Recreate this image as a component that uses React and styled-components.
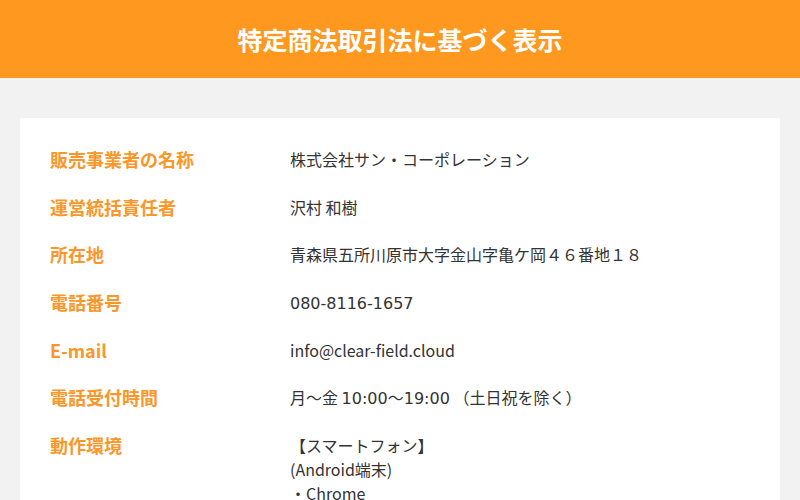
import React from 'react'
import styled, { createGlobalStyle } from 'styled-components'

const GlobalStyle = createGlobalStyle`
  html, body {
    margin: 0;
    padding: 0;
    background: #f2f2f2;
  }
  body {
    font-family: "Noto Sans CJK JP", "Liberation Sans", sans-serif;
    color: #333;
  }
`;

const Header = styled.header`
  height: 78px;
  background-color: #ff981f;
  display: flex;
  align-items: center;
  justify-content: center;
`;

const Title = styled.h1`
  margin: 0;
  color: #fff;
  font-size: 25px;
  font-weight: 700;
`;

const Main = styled.main`
  padding: 40px 20px;
`;

const Card = styled.section`
  background: #fff;
  padding: 29px 30px 30px;
`;

const Table = styled.dl`
  margin: 0;
  display: grid;
  grid-template-columns: 240px 1fr;
  row-gap: 23.67px;
`;

const Label = styled.dt`
  color: #fb9628;
  font-size: 18px;
  font-weight: 700;
  line-height: 24px;
`;

const Value = styled.dd`
  margin: 0;
  font-size: 16px;
  line-height: 24px;
  color: #333;
`;

// wider digits, closer to the reference's sans
const Num = styled.span`
  font-family: "DejaVu Sans", "Noto Sans CJK JP", sans-serif;
  font-size: 16px;
  line-height: 0;
`;

const rows = [
  ['販売事業者の名称', ['株式会社サン・コーポレーション']],
  ['運営統括責任者', ['沢村 和樹']],
  ['所在地', ['青森県五所川原市大字金山字亀ケ岡４６番地１８']],
  ['電話番号', [<Num key="tel">080-8116-1657</Num>]],
  ['E-mail', ['info@clear-field.cloud']],
  ['電話受付時間', [<React.Fragment key="time">月〜金 <Num>10:00</Num>〜<Num>19:00</Num> （土日祝を除く）</React.Fragment>]],
  ['動作環境', ['【スマートフォン】', '(Android端末)', '・Chrome']],
];

const App = () => {
  return (
    <>
      <GlobalStyle />
      <Header>
        <Title>特定商法取引法に基づく表示</Title>
      </Header>
      <Main>
        <Card>
          <Table>
            {rows.map(([label, lines]) => (
              <React.Fragment key={label}>
                <Label>{label}</Label>
                <Value>
                  {lines.map((l, i) => (
                    <div key={i}>{l}</div>
                  ))}
                </Value>
              </React.Fragment>
            ))}
          </Table>
        </Card>
      </Main>
    </>
  )
}

export default App
